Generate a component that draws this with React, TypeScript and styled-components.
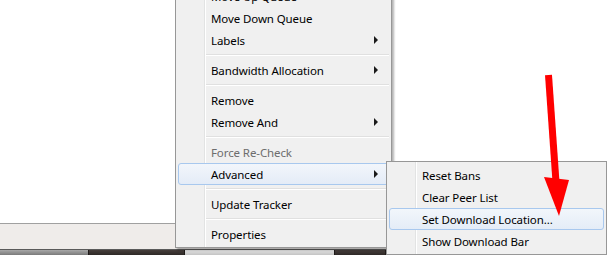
import React from 'react';
import styled, { createGlobalStyle } from 'styled-components';

const GlobalStyle = createGlobalStyle`
  html, body {
    margin: 0;
    padding: 0;
    background: #ffffff;
  }
  body {
    font-family: "Noto Sans", "Liberation Sans", sans-serif;
    font-size: 11.5px;
    letter-spacing: -0.1px;
  }
`;

const Screen = styled.div`
  position: relative;
  width: 607px;
  height: 255px;
  overflow: hidden;
  display: flex;
  flex-direction: column;
  background: #ffffff;
`;

const Content = styled.div`
  height: 223px;
  background: #ffffff;
  border-bottom: 1px solid #a0a0a0;
  box-shadow: 0 1px 0 #d6d6d6;
`;

const StatusArea = styled.div`
  flex: 1;
  background: #efecea;
  border-bottom: 1px solid #5a5a5a;
`;

const Taskbar = styled.div`
  height: 5px;
  display: flex;
  background: #2e2a28;
`;

const TaskSegment = styled.div<{ $w: number; $tone: 'gray' | 'dark' | 'light' }>`
  width: ${(p) => p.$w}px;
  border-right: 1px solid #1e1a18;
  background: ${(p) =>
    p.$tone === 'gray'
      ? 'linear-gradient(#a8a8a8, #7a7a7a)'
      : p.$tone === 'light'
      ? 'linear-gradient(#e2e2e2, #c4c4c4)'
      : 'linear-gradient(#463e3b, #2e2826)'};
`;

const Menu = styled.div<{ $left: number; $top: number; $width: number }>`
  position: absolute;
  left: ${(p) => p.$left}px;
  top: ${(p) => p.$top}px;
  width: ${(p) => p.$width}px;
  box-sizing: border-box;
  padding: 2px;
  border: 1px solid #979797;
  box-shadow: 2px 2px 2px rgba(0, 0, 0, 0.3);
  background:
    linear-gradient(
      to right,
      transparent 28px,
      #e2e3e3 28px,
      #e2e3e3 29px,
      #ffffff 29px,
      #ffffff 30px,
      transparent 30px
    ),
    #f0f0f0;
  color: #000;
`;

const Item = styled.div<{ $active?: boolean; $disabled?: boolean }>`
  position: relative;
  height: 22px;
  box-sizing: border-box;
  display: flex;
  align-items: center;
  padding: 2px 8px 0 32px;
  white-space: nowrap;
  color: ${(p) => (p.$disabled ? '#6d6d6d' : '#000')};
  border: 1px solid ${(p) => (p.$active ? '#a8c8ee' : 'transparent')};
  border-radius: 3px;
  background: ${(p) =>
    p.$active ? 'linear-gradient(#f2f6fb, #e4ecf7)' : 'transparent'};
`;

const Label = styled.span`
  flex: 1;
  line-height: 18px;
`;

const Arrow = styled.span`
  width: 0;
  height: 0;
  margin: 0 2px 2px 0;
  border-top: 4px solid transparent;
  border-bottom: 4px solid transparent;
  border-left: 4px solid #1a1a1a;
`;

const Separator = styled.div`
  height: 8px;
  margin-left: 28px;
  display: flex;
  flex-direction: column;
  justify-content: center;
  &::before {
    content: '';
    height: 1px;
    background: #e0e0e0;
  }
  &::after {
    content: '';
    height: 1px;
    background: #ffffff;
  }
`;

const ArrowMark = styled.svg`
  position: absolute;
  left: 0;
  top: 0;
  pointer-events: none;
`;

type Entry = { label?: string; sub?: boolean; active?: boolean; disabled?: boolean; sep?: boolean };

const mainItems: Entry[] = [
  { label: 'Move Up Queue' },
  { label: 'Move Down Queue' },
  { label: 'Labels', sub: true },
  { sep: true },
  { label: 'Bandwidth Allocation', sub: true },
  { sep: true },
  { label: 'Remove' },
  { label: 'Remove And', sub: true },
  { sep: true },
  { label: 'Force Re-Check', disabled: true },
  { label: 'Advanced', sub: true, active: true },
  { sep: true },
  { label: 'Update Tracker' },
  { sep: true },
  { label: 'Properties' },
];

const subItems: Entry[] = [
  { label: 'Reset Bans' },
  { label: 'Clear Peer List' },
  { label: 'Set Download Location...', active: true },
  { label: 'Show Download Bar' },
];

const renderEntries = (entries: Entry[]) =>
  entries.map((e, i) =>
    e.sep ? (
      <Separator key={i} />
    ) : (
      <Item key={i} $active={e.active} $disabled={e.disabled}>
        <Label>{e.label}</Label>
        {e.sub && <Arrow />}
      </Item>
    ),
  );

export default function App() {
  return (
    <>
      <GlobalStyle />
      <Screen>
        <Content />
        <StatusArea />
        <Taskbar>
          <TaskSegment $w={88} $tone="gray" />
          <TaskSegment $w={95} $tone="dark" />
          <TaskSegment $w={149} $tone="light" />
          <TaskSegment $w={50} $tone="dark" />
        </Taskbar>

        <Menu $left={175} $top={-18} $width={217}>
          {renderEntries(mainItems)}
        </Menu>

        <Menu $left={386} $top={161} $width={221}>
          {renderEntries(subItems)}
        </Menu>

        <ArrowMark width={607} height={255} viewBox="0 0 607 255">
          <line x1={548.5} y1={75} x2={556} y2={182} stroke="#ff0000" strokeWidth={7} />
          <polygon points="544,177 569,180 559,216" fill="#ff0000" />
        </ArrowMark>
      </Screen>
    </>
  );
}
